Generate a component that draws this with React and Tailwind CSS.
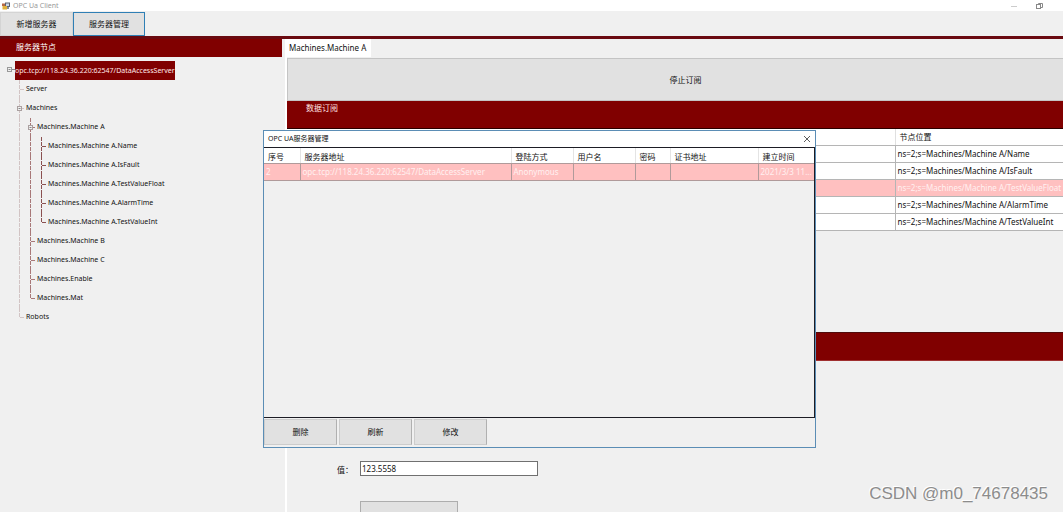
import React from "react";
import clsx from "clsx";

// guides: for every ancestor level, whether its line continues past this row
const treeRows = [
  { label: "Server", guides: [] },
  { label: "Machines", guides: [], open: true },
  { label: "Machines.Machine A", guides: [true], open: true },
  { label: "Machines.Machine A.Name", guides: [true, true] },
  { label: "Machines.Machine A.IsFault", guides: [true, true] },
  { label: "Machines.Machine A.TestValueFloat", guides: [true, true] },
  { label: "Machines.Machine A.AlarmTime", guides: [true, true] },
  { label: "Machines.Machine A.TestValueInt", guides: [true, true], last: true },
  { label: "Machines.Machine B", guides: [true] },
  { label: "Machines.Machine C", guides: [true] },
  { label: "Machines.Enable", guides: [true] },
  { label: "Machines.Mat", guides: [true], last: true },
  { label: "Robots", guides: [], last: true },
];

const guideColors = ["#d2c4c4", "#a87878", "#8a5050"];

const nodes = [
  { path: "ns=2;s=Machines/Machine A/Name" },
  { path: "ns=2;s=Machines/Machine A/IsFault" },
  { path: "ns=2;s=Machines/Machine A/TestValueFloat", selected: true },
  { path: "ns=2;s=Machines/Machine A/AlarmTime" },
  { path: "ns=2;s=Machines/Machine A/TestValueInt" },
];

const servers = [
  ["2", "opc.tcp://118.24.36.220:62547/DataAccessServer", "Anonymous", "", "", "", "2021/3/3 11..."],
];

const serverColumns = [
  { title: "序号", width: "w-[36px]" },
  { title: "服务器地址", width: "w-[211px]" },
  { title: "登陆方式", width: "w-[62px]" },
  { title: "用户名", width: "w-[62px]" },
  { title: "密码", width: "w-[35px]" },
  { title: "证书地址", width: "w-[88px]" },
  { title: "建立时间", width: "" },
];

const Guide = ({ color }) => (
  <svg className="w-[11px] h-[19px] shrink-0" viewBox="0 0 11 19" aria-hidden="true">
    <path d="M0.5 0V19" stroke={color} strokeDasharray="4 1" />
  </svg>
);

const Elbow = ({ color, last, open }) => (
  <svg className="w-[7px] h-[19px] shrink-0 overflow-visible" viewBox="0 0 7 19" aria-hidden="true">
    <path d={last ? "M0.5 0V10" : "M0.5 0V19"} stroke={color} strokeDasharray="4 1" />
    <path d="M1 9.5H5" stroke={color} />
    {open && (
      <>
        <rect x="-1.5" y="7.5" width="4" height="4" fill="#f0f0f0" stroke="#aaa0a0" />
        <path d="M-0.5 9.5H1.5" stroke="#888" />
      </>
    )}
  </svg>
);

const TreeRow = ({ row }) => (
  <li className="flex h-[19px] items-center pl-[19px]">
    {row.guides.map((_, i) => (
      <Guide key={i} color={guideColors[i]} />
    ))}
    <Elbow color={guideColors[row.guides.length]} last={row.last} open={row.open} />
    <span>{row.label}</span>
  </li>
);

const TitleBar = () => (
  <header className="flex h-[11px] items-center bg-white pl-[2px] pr-5 text-[7px] leading-[11px] text-[#999]">
    <svg className="h-[8px] w-[8px]" viewBox="0 0 8 8" aria-hidden="true">
      <rect x="3" y="0.5" width="5" height="4.5" fill="#5c6470" />
      <rect x="4" y="1.5" width="3" height="2.5" fill="#c9d6ea" />
      <rect x="0" y="1.5" width="3" height="2.5" fill="#b86a45" />
      <rect x="0.5" y="4" width="4.5" height="3.5" fill="#e0b23c" />
      <rect x="5" y="5" width="2" height="2" fill="#8a8f96" />
    </svg>
    <h1 className="ml-[3px]">OPC Ua Client</h1>
    <div className="ml-auto flex items-center gap-[18px]">
      <button type="button" aria-label="Minimize">
        <svg className="h-[8px] w-[7px]" viewBox="0 0 7 8">
          <path d="M0 4.5H6" stroke="#ccc" />
        </svg>
      </button>
      <button type="button" aria-label="Restore">
        <svg className="h-[8px] w-[7px]" viewBox="0 0 7 8" fill="none" stroke="#888">
          <path d="M2.5 2.5V1.5H6.5V5.5H5" />
          <rect x="0.5" y="2.5" width="4" height="4" />
        </svg>
      </button>
    </div>
  </header>
);

const ServerDialog = () => (
  <section
    role="dialog"
    aria-label="OPC UA服务器管理"
    className="absolute left-[263px] top-[130px] flex h-[318px] w-[553px] flex-col border border-[#5b8db5] bg-[#f0f0f0]"
  >
    <div className="flex h-[16px] shrink-0 items-center justify-between bg-white pl-1 pr-[5px] text-[7px]">
      <h2>OPC UA服务器管理</h2>
      <button type="button" aria-label="Close">
        <svg className="h-[6px] w-[6px]" viewBox="0 0 6 6" stroke="#333" strokeWidth="0.8">
          <path d="M0 0L6 6M6 0L0 6" />
        </svg>
      </button>
    </div>
    <div className="flex-1 border border-l-0 border-[#1d1d25]">
      <table className="w-full table-fixed border-collapse text-[8px]">
        <thead>
          <tr className="h-[15px] bg-white">
            {serverColumns.map((c) => (
              <th
                key={c.title}
                className={clsx(
                  "border-r border-b border-r-[#e4e4e4] border-b-[#b09a9a] p-0 pt-[2px] pl-[4px] text-left font-normal leading-[13px] last:border-r-0",
                  c.width
                )}
              >
                {c.title}
              </th>
            ))}
          </tr>
        </thead>
        <tbody>
          {servers.map((s) => (
            <tr key={s[0]} className="h-[17px] bg-[#ffc0c0] text-[#fff0f0]">
              {s.map((value, i) => (
                <td
                  key={i}
                  className="whitespace-nowrap border-r border-b border-[#b09a9a] p-0 pl-[2px] leading-[16px] last:border-r-0"
                >
                  {value}
                </td>
              ))}
            </tr>
          ))}
        </tbody>
      </table>
    </div>
    <div className="flex h-[29px] shrink-0 gap-[2px] pt-[1px] pb-[2px] text-[8px]">
      {["删除", "刷新", "修改"].map((label) => (
        <button
          key={label}
          type="button"
          className="w-[73px] border border-[#cccccc] border-r-[#b0b0b0] bg-[#e1e1e1]"
        >
          {label}
        </button>
      ))}
    </div>
  </section>
);

const App = () => {
  return (
    <div className="relative flex h-screen flex-col overflow-hidden bg-[#f0f0f0] font-['Noto_Sans','Noto_Sans_CJK_SC',sans-serif] text-[8px] text-[#111]">
      <TitleBar />

      <nav className="flex h-[25px] shrink-0 pt-[1px]">
        <button type="button" className="w-[73px] border border-[#d4d4d4] bg-[#e1e1e1]">
          新增服务器
        </button>
        <button type="button" className="w-[72px] border border-[#2f7fb5] bg-[#e1e1e1]">
          服务器管理
        </button>
      </nav>

      <div className="flex min-h-0 flex-1 border-t-3 border-[#6a0a10]">
        <aside className="w-[282px] shrink-0">
          <h2 className="h-[18px] bg-[#800000] pl-4 leading-[16px] text-white">服务器节点</h2>
          <ul className="pt-[4px] text-[7px]">
            <li className="flex h-[19px] items-center pl-[7px]">
              <svg className="h-[19px] w-[8px]" viewBox="0 0 8 19" aria-hidden="true">
                <rect x="0.5" y="6.5" width="4" height="4" fill="none" stroke="#999" />
                <path d="M1.5 8.5H3.5M5 8.5H8" stroke="#888" />
              </svg>
              <span className="bg-[#800000] leading-[19px] text-[#ffe8e8]">
                opc.tcp://118.24.36.220:62547/DataAccessServer
              </span>
            </li>
            {treeRows.map((row) => (
              <TreeRow key={row.label} row={row} />
            ))}
          </ul>
        </aside>

        <main className="ml-[3px] flex min-w-0 flex-1 flex-col border-l-2 border-white">
          <div className="flex h-[18px] shrink-0">
            <button type="button" className="bg-white pl-[2px] pr-[5px]">
              Machines.Machine A
            </button>
          </div>
          <button
            type="button"
            className="mt-[1px] h-[43px] shrink-0 border border-r-0 border-[#c4c4c4] bg-[#e1e1e1] pl-5"
          >
            停止订阅
          </button>
          <h2 className="h-[28px] shrink-0 border-b border-[#2a0000] bg-[#800000] pl-[19px] leading-[14px] text-[#ffe0e0]">
            数据订阅
          </h2>
          <div className="h-[203px] shrink-0 overflow-hidden">
            <table className="w-full table-fixed border-collapse bg-white">
              <thead>
                <tr className="h-[16px]">
                  <th className="w-[608px] border-r border-b border-r-[#e0e0e0] border-b-[#b5b5b5] p-0" />
                  <th className="border-b border-[#b5b5b5] p-0 pl-[4px] text-left font-normal leading-[15px]">
                    节点位置
                  </th>
                </tr>
              </thead>
              <tbody>
                {nodes.map((n) => (
                  <tr
                    key={n.path}
                    className={clsx("h-[17px]", n.selected && "bg-[#ffc0c0] text-[#fff0f0]")}
                  >
                    <td className="border-r border-b border-[#b5b5b5] p-0" />
                    <td className="whitespace-nowrap border-b border-[#b5b5b5] p-0 pl-[2px] leading-[16px]">
                      {n.path}
                    </td>
                  </tr>
                ))}
              </tbody>
            </table>
          </div>
          <div className="h-[29px] shrink-0 border-y border-t-[#500a0a] border-b-[#a03030] bg-[#800000]" />
          <form className="pl-[50px] pt-[100px]">
            <div className="flex items-center">
              <label htmlFor="node-value" className="w-[23px] pt-[2px]">
                值：
              </label>
              <input
                id="node-value"
                defaultValue="123.5558"
                className="h-[15px] w-[178px] border border-[#707070] bg-white px-[1px]"
              />
            </div>
            <button
              type="button"
              aria-label="Write value"
              className="ml-[23px] mt-[25px] h-[40px] w-[98px] border border-[#adadad] bg-[#e1e1e1]"
            />
          </form>
        </main>
      </div>

      <ServerDialog />

      <p className="absolute bottom-[8px] right-[15px] font-['Liberation_Sans',sans-serif] text-[17px] leading-[20px] text-[#8c8c8c] [text-shadow:-1px_-1px_0_#fff]">
        CSDN @m0_74678435
      </p>
    </div>
  );
};

export default App;
